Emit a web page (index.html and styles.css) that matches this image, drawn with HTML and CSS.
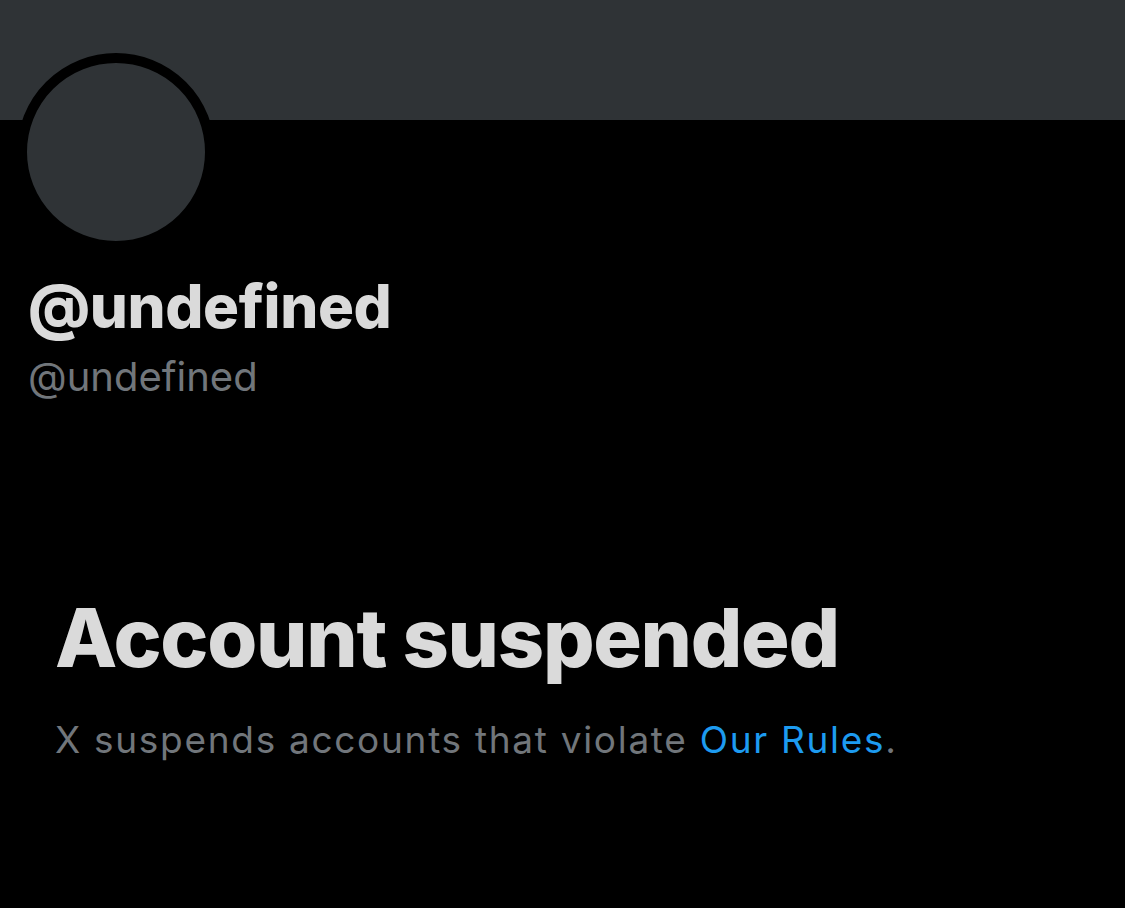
FILE: index.html
```html
<!DOCTYPE html>
<html lang="en">

<head>
    <meta charset="UTF-8" />
    <meta name="viewport" content="width=device-width, initial-scale=1" />
    <title>@undefined / X</title>
    <link rel="stylesheet" href="styles.css">
</head>

<body>
    <div class="banner"></div>

    <div class="profile">
        <div class="avatar"></div>
        <div class="names">
            <h2 class="display-name">@undefined</h2>
            <div class="handle">@undefined</div>
        </div>
    </div>

    <div class="suspended">
        <h1>Account suspended</h1>
        <p>X suspends accounts that violate <a href="#">Our Rules</a>.</p>
    </div>
</body>

</html>
```

FILE: styles.css
```css
body {
    font-family: Inter, 'Liberation Sans', Arial, sans-serif;
    background: #000;
    color: #dadada;
    margin: 0;
    height: 908px;
    overflow: hidden;
}

.banner {
    height: 120px;
    background: #2f3336;
}

.profile {
    padding: 0 28px;
}

.avatar {
    width: 198px;
    height: 198px;
    box-sizing: border-box;
    margin: -67px 0 0 -11px;
    border: 10px solid #000;
    border-radius: 50%;
    background: #2f3336;
}

.names {
    margin-top: 20px;
}

.display-name {
    margin: 0;
    font-size: 60px;
    font-weight: 800;
    line-height: 70px;
    letter-spacing: -0.4px;
}

.handle {
    margin-top: 13px;
    font-size: 40px;
    line-height: 46px;
    color: #71767b;
}

.suspended {
    padding: 0 55px;
    margin-top: 193px;
}

.suspended h1 {
    margin: 0;
    font-size: 81px;
    font-weight: 800;
    line-height: 90px;
    letter-spacing: -1.3px;
}

.suspended p {
    margin: 35px 0 0;
    font-size: 37px;
    line-height: 44px;
    letter-spacing: 1.7px;
    color: #71767b;
}

.suspended a {
    color: #1d9bf0;
    text-decoration: none;
}
```
